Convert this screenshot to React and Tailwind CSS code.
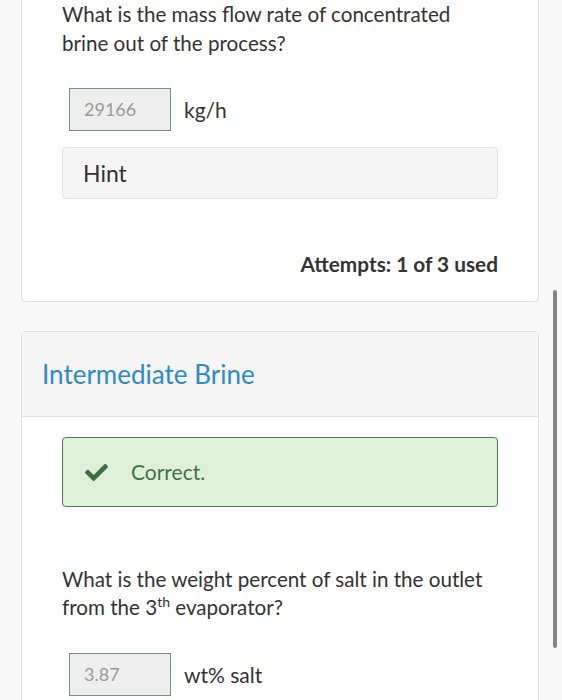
import React from "react";
import { FaCheck } from "react-icons/fa";

export default function App() {
  return (
    <div className="relative h-[700px] w-[562px] overflow-hidden bg-[#f9f9f9] font-['Lato','Noto_Sans',sans-serif] text-[#333]">
      <div className="ml-[21px] w-[518px]">
        {/* Card 1 */}
        <div className="rounded-b-[5px] border border-t-0 border-[#dedede] bg-white px-10 pb-[24px]">
          <p className="text-[20.6px] leading-[29px]">
            What is the mass flow rate of concentrated brine out of the process?
          </p>
          <div className="mt-[30px] flex items-center">
            <div className="ml-[7px] flex h-[43px] w-[102px] items-center border border-[#6f9470] bg-[#eeeeee] pl-[14px] text-[18px] text-[#9a9a9a]">
              29166
            </div>
            <span className="ml-[13px] text-[21px]">kg/h</span>
          </div>
          <div className="mt-[16px] flex h-[52px] items-center rounded-[4px] border border-[#e2e2e2] bg-[#f5f5f5] pl-[20px] text-[23px]">
            Hint
          </div>
          <div className="mt-[52px] text-right text-[20.8px] font-bold leading-[26px] text-[#333]">
            Attempts: 1 of 3 used
          </div>
        </div>

        {/* Card 2 */}
        <div className="mt-[29px] rounded-t-[5px] border border-b-0 border-[#dedede] bg-white">
          <div className="flex h-[85px] items-center border-b border-[#e2e2e2] bg-[#f5f5f5] pl-[20px] text-[26px] text-[#2b8bcd]">
            Intermediate Brine
          </div>
          <div className="px-10 pb-10 pt-[20px]">
            <div className="flex h-[70px] items-center rounded-[4px] border border-[#4f7a50] bg-[#dff0d8] pl-[22px] text-[21px] text-[#447046]">
              <FaCheck className="shrink-0 text-[#3d6e3f]" size={23} />
              <span className="ml-[23px]">Correct.</span>
            </div>
            <p className="mt-[58px] text-[20.6px] leading-[28px]">
              What is the weight percent of salt in the outlet from the 3
              <span className="relative top-[-8px] text-[14px] leading-none">th</span> evaporator?
            </p>
            <div className="mt-[32px] flex items-center">
              <div className="ml-[7px] flex h-[43px] w-[102px] items-center border border-[#6f9470] bg-[#eeeeee] pl-[14px] text-[18px] text-[#9a9a9a]">
                3.87
              </div>
              <span className="ml-[13px] text-[21px]">wt% salt</span>
            </div>
          </div>
        </div>
      </div>

      {/* scrollbar */}
      <div className="absolute left-[553px] top-[290px] h-[358px] w-[4px] rounded-full bg-[#858585]" />
    </div>
  );
}
